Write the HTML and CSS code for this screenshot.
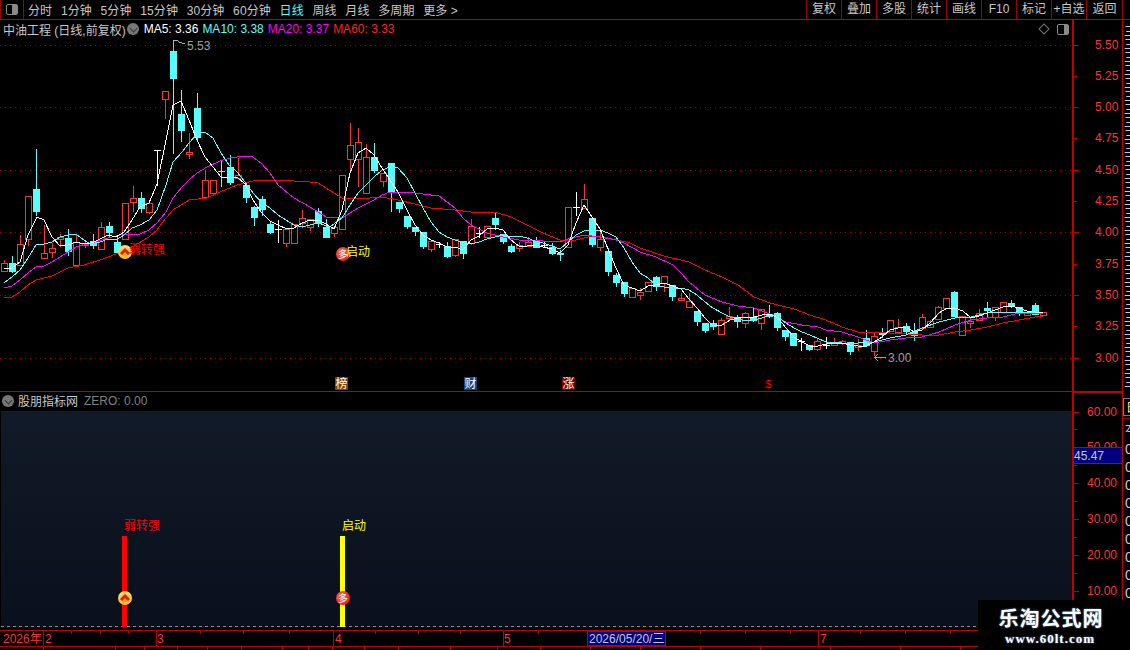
FILE: index.html
```html
<!DOCTYPE html>
<html lang="zh-CN">
<head>
  <meta charset="UTF-8" />
  <title>中油工程 日线</title>
  <link rel="stylesheet" href="styles.css">
</head>
<body>

  <header class="toolbar">
    <div class="panel-btn"><span class="panel-icon"></span></div>
    <nav class="periods">
      <a>分时</a>
      <a>1分钟</a>
      <a>5分钟</a>
      <a>15分钟</a>
      <a>30分钟</a>
      <a>60分钟</a>
      <a class="active">日线</a>
      <a>周线</a>
      <a>月线</a>
      <a>多周期</a>
      <a>更多 &gt;</a>
    </nav>
    <div class="actions">
      <a>复权</a>
      <a>叠加</a>
      <a>多股</a>
      <a>统计</a>
      <a>画线</a>
      <a>F10</a>
      <a>标记</a>
      <a>+自选</a>
      <a class="last">返回</a>
    </div>
  </header>

  <main class="workspace">
    <section class="charts">
      <div class="quote-bar">
        <span class="stock-name">中油工程 (日线,前复权)</span>
        <span class="round-icon"></span>
        <span class="ma ma5">MA5: 3.36</span>
        <span class="ma ma10">MA10: 3.38</span>
        <span class="ma ma20">MA20: 3.37</span>
        <span class="ma ma60">MA60: 3.33</span>
        <span class="diamond"></span>
        <span class="panel-icon small"></span>
      </div>
      <svg id="priceChart" class="price-chart" width="1072" height="353" viewBox="0 38 1072 353"></svg>
      <div class="indicator-bar">
        <span class="round-icon"></span>
        <span class="indicator-name">股朋指标网</span>
        <span class="indicator-value">ZERO: 0.00</span>
      </div>
      <svg id="indicatorChart" class="indicator-chart" width="1072" height="219" viewBox="0 411 1072 219"></svg>
      <svg id="dateAxis" class="date-axis" width="1072" height="20" viewBox="0 630 1072 20"></svg>
    </section>

    <svg id="valueAxis" class="value-axis" width="51" height="630" viewBox="1072 20 51 630"></svg>

    <aside class="side">
      <div id="sideTop" class="side-top"></div>
      <div class="side-code">日</div>
      <div class="side-label">本</div>
      <div id="sideRows" class="side-rows"></div>
    </aside>
  </main>

  <div class="watermark">
    <p class="wm-name">乐淘公式网</p>
    <p class="wm-url">www.60lt.com</p>
  </div>

  <script src="chart.js"></script>
</body>
</html>
```

FILE: styles.css
```css
* {
  box-sizing: border-box;
}

body {
  margin: 0;
  width: 1130px;
  height: 650px;
  overflow: hidden;
  position: relative;
  background: #000;
  color: #c8c8c8;
  font-family: "Liberation Sans", "Noto Sans CJK SC", sans-serif;
  font-size: 12px;
}

svg {
  display: block;
}

svg text {
  font-family: "Liberation Sans", "Noto Sans CJK SC", sans-serif;
  font-size: 12px;
}

.toolbar {
  display: flex;
  height: 20px;
  border-bottom: 1px solid #c00000;
}

.panel-btn {
  width: 24px;
  display: flex;
  align-items: center;
  justify-content: center;
  border-left: 1px solid #a00000;
  border-right: 1px solid #a00000;
}

.panel-icon {
  display: block;
  width: 12px;
  height: 11px;
  border: 1px solid #8a8a8a;
  border-radius: 2px;
  background: linear-gradient(to right, #000 55%, #8a8a8a 55%);
}

.periods {
  display: flex;
  align-items: center;
  gap: 8.7px;
  margin-left: 4px;
}

.periods a {
  letter-spacing: 0.1px;
}

.periods .active {
  color: #55ffff;
}

.actions {
  display: flex;
  margin-left: auto;
  margin-right: 7px;
}

.actions a {
  width: 35px;
  line-height: 19px;
  text-align: center;
  border-left: 1px solid #a00000;
}

.actions .last {
  width: 37px;
  border-right: 1px solid #a00000;
}

.workspace {
  display: flex;
  height: 630px;
}

.charts {
  width: 1072px;
  flex: none;
}

.quote-bar {
  display: flex;
  align-items: center;
  height: 18px;
  padding: 0 3px;
}

.stock-name {
  margin-right: 1px;
}

.round-icon {
  position: relative;
  display: block;
  width: 12px;
  height: 12px;
  border-radius: 50%;
  background: #777;
}

.round-icon::after {
  content: "";
  position: absolute;
  left: 3px;
  top: 2px;
  width: 6px;
  height: 6px;
  border-right: 1.5px solid #222;
  border-bottom: 1.5px solid #222;
  transform: scale(0.8) rotate(45deg);
}

.ma {
  margin-left: 4px;
}

.ma5 {
  margin-left: 5px;
  color: #fff;
}

.ma10 {
  color: #55ffff;
}

.ma20 {
  color: #ff00ff;
}

.ma60 {
  color: #ff2020;
}

.diamond {
  width: 8px;
  height: 8px;
  margin-left: auto;
  margin-right: 9px;
  border: 1px solid #777;
  transform: rotate(45deg);
}

.indicator-bar {
  display: flex;
  align-items: center;
  height: 20px;
  padding: 0 2px 2px;
  border-top: 1px solid #c00000;
}

.indicator-name {
  margin-left: 4px;
}

.indicator-value {
  margin-left: 6px;
  color: #808080;
}

.value-axis {
  flex: none;
}

.side {
  width: 7px;
  overflow: hidden;
  line-height: 13px;
}

.side-top {
  height: 372px;
  padding: 6px 0 0 1px;
  overflow: hidden;
}

.side-code {
  height: 18px;
  margin-top: 6px;
  padding-left: 2px;
  line-height: 18px;
  color: #ffff55;
  border: 1px solid #777;
  border-right: 0;
}

.side-label {
  height: 22px;
  margin-top: 2px;
  padding: 4px 0 0 2px;
  border-top: 1px solid #a00000;
}

.side-rows {
  padding-left: 2px;
  line-height: 18px;
  font-size: 14px;
  white-space: nowrap;
}

.watermark {
  position: absolute;
  right: 0;
  bottom: 0;
  width: 152px;
  height: 50px;
  background: #000;
  color: #fff;
  text-align: center;
}

.watermark p {
  margin: 0;
  text-shadow: 0 0 2px #6d9bd8;
}

.wm-name {
  padding: 7px 6px 0 0;
  font-size: 20px;
  line-height: 25px;
  font-weight: bold;
  letter-spacing: 1px;
}

.wm-url {
  padding-right: 8px;
  font-family: "Liberation Serif", serif;
  font-size: 13px;
  line-height: 14px;
  font-weight: bold;
  letter-spacing: 1px;
}
```

FILE: chart.js
```js
// [type, high, top, bottom, low] in screen pixels. r = hollow up, c = solid down, w = doji
const candles = [
  ['r',260,263,271,271],['c',256,263,271,273],['r',235,244,265,265],['r',196,196,239,246],['c',149,189,211,216],
  ['r',225,253,258,258],['r',243,248,252,258],['r',234,237,239,247],['c',229,238,251,256],['r',235,242,265,267],
  ['r',242,243,245,248],['c',234,241,245,249],['r',222,227,249,249],['c',222,226,232,237],['c',237,242,252,253],
  ['r',203,203,239,239],['r',186,198,202,212],['c',192,198,208,213],['r',203,203,212,214],['w',150,150,150,186],
  ['r',91,91,99,119],['c',40,51,78,154],['c',90,114,130,142],['r',133,152,154,159],['c',93,108,137,140],
  ['r',170,180,197,197],['r',180,180,193,193],['c',160,171,171,187],['c',155,167,182,185],['r',158,175,178,178],
  ['c',185,185,197,203],['c',206,207,217,226],['c',196,199,209,216],['c',221,224,232,234],['w',220,229,229,243],
  ['r',229,229,243,247],['r',224,224,243,243],['r',210,218,223,228],['r',219,219,227,231],['c',208,211,223,227],
  ['c',219,227,237,237],['r',226,227,233,237],['r',175,175,229,229],['r',123,145,159,173],['r',128,142,159,187],
  ['r',144,157,193,193],['c',143,157,170,173],['r',173,173,181,187],['c',163,163,191,212],['c',202,202,208,213],
  ['c',216,216,226,229],['c',227,227,231,236],['c',232,232,246,249],['r',241,241,249,252],['w',242,244,244,248],
  ['c',242,246,256,258],['r',239,239,255,257],['c',241,241,253,259],['r',219,226,243,245],['w',227,233,233,238],
  ['r',226,226,237,237],['c',213,218,224,230],['c',234,234,241,244],['c',244,246,251,253],['r',242,245,248,252],
  ['r',237,242,246,246],['c',237,241,247,248],['w',242,245,245,248],['c',243,247,253,255],['c',250,253,254,261],
  ['r',207,207,247,247],['w',192,207,207,216],['r',184,199,208,208],['c',218,218,244,247],['r',232,239,247,251],
  ['c',248,251,271,276],['c',273,275,282,287],['c',282,282,293,297],['r',288,288,297,298],['r',288,292,295,300],
  ['r',282,282,291,291],['c',276,277,286,291],['r',276,276,283,292],['c',285,285,296,301],['r',293,298,300,300],
  ['r',293,301,307,308],['c',311,311,321,326],['c',323,323,330,333],['c',320,323,326,330],['r',318,320,334,335],
  ['r',307,316,318,321],['c',315,317,321,328],['r',312,313,323,328],['c',307,317,320,322],['r',309,309,323,330],
  ['c',305,314,316,318],['c',312,313,327,331],['c',330,330,336,341],['c',333,333,345,345],['w',338,341,341,351],
  ['c',345,345,349,351],['r',339,341,349,351],['w',337,345,345,349],['r',338,342,345,345],['r',340,341,343,345],
  ['c',342,342,351,355],['r',339,345,347,351],['c',330,338,345,347],['r',332,336,351,356],['c',328,332,334,338],
  ['r',320,320,331,331],['r',319,327,332,332],['c',323,326,331,335],['c',323,332,335,341],['r',314,317,328,329],
  ['r',320,321,327,328],['r',306,307,319,319],['r',298,298,308,308],['c',291,292,316,316],['r',316,316,335,335],
  ['r',317,321,323,328],['r',309,313,320,320],['c',302,308,310,318],['r',307,307,317,321],['r',302,302,312,312],
  ['c',300,303,306,308],['c',307,307,311,316],['r',312,312,315,315],['c',303,305,314,315],['r',312,312,315,315]
];

const ma5 = [4,268,12,268,20,262,28,235,37,217,44,220,52,237,60,246,68,245,76,242,84,244,92,243,100,239,108,235,116,237,124,232,132,220,140,207,149,203,157,184,166,140,173,105,181,101,189,120,197,140,205,157,213,167,221,177,229,178,237,177,245,184,253,200,261,212,270,221,278,225,287,229,294,228,302,223,310,220,318,220,326,224,334,229,342,210,350,173,358,153,366,148,374,155,382,168,390,180,398,192,407,210,415,225,423,235,431,240,439,243,447,247,455,247,463,250,471,240,479,236,487,229,495,228,503,230,511,240,519,246,527,246,535,245,543,247,552,249,560,253,568,245,576,223,584,205,592,217,600,229,608,249,616,268,624,285,632,288,640,291,648,286,656,285,664,283,673,286,681,289,689,299,697,308,705,318,713,326,722,325,730,320,738,318,746,317,754,317,762,315,770,314,778,318,786,328,794,337,802,342,810,346,818,346,826,344,834,343,842,343,850,345,858,346,866,346,874,342,882,337,890,330,898,328,906,327,914,332,922,330,930,323,939,313,947,308,955,308,963,311,971,318,979,316,987,313,995,310,1003,307,1011,306,1019,308,1027,311,1035,312,1043,313];
const ma10 = [4,283,12,277,20,270,28,258,36,245,44,244,52,242,60,237,68,235,76,234,84,240,92,245,100,242,108,239,116,240,124,235,132,228,140,225,149,220,157,210,166,185,173,162,182,152,189,143,197,134,205,132,213,138,221,153,229,165,237,172,245,182,253,193,261,202,270,208,278,215,286,220,294,225,302,227,318,223,330,227,342,218,350,205,358,193,366,185,374,177,382,170,390,167,398,168,407,178,415,193,423,208,431,222,439,232,447,237,455,240,463,243,471,244,479,242,487,239,495,237,503,235,511,237,519,236,527,238,535,241,543,243,552,246,560,249,568,242,576,235,584,231,592,230,600,230,608,233,616,237,624,248,632,262,640,273,648,278,656,285,664,287,673,288,681,288,689,290,697,295,705,302,713,308,722,313,730,317,738,319,746,321,754,320,762,318,770,315,778,317,786,323,794,328,802,332,810,335,826,342,842,343,858,343,874,342,890,338,906,335,922,328,939,322,955,318,971,317,987,313,1003,312,1019,312,1035,312,1043,312];
const ma20 = [4,288,12,286,20,280,28,273,36,267,44,266,52,262,60,257,68,252,76,247,84,245,92,243,108,238,124,234,140,234,149,230,157,223,166,212,173,198,182,187,189,180,197,173,207,167,220,161,230,158,245,156,253,157,261,163,270,173,278,185,294,198,310,207,326,217,342,218,350,213,358,208,374,200,382,195,390,192,398,192,415,193,431,195,439,196,447,202,455,208,463,218,471,225,487,233,503,237,519,240,543,241,560,242,568,239,584,235,600,237,616,240,624,243,640,252,656,257,673,265,681,273,689,282,705,295,722,302,738,306,754,308,770,314,786,322,802,325,818,327,826,330,842,332,858,337,874,343,890,340,906,338,922,337,939,332,955,325,971,320,987,318,1003,317,1019,313,1035,313,1043,313];
const ma60 = [4,298,12,297,20,292,28,285,36,280,52,276,68,268,84,265,100,260,116,254,132,247,149,237,157,230,166,218,173,210,189,200,207,198,220,192,237,185,253,181,278,180,294,181,310,182,318,183,326,188,334,193,342,198,358,199,382,197,398,200,415,204,431,208,455,210,471,212,495,212,511,217,527,225,543,233,560,240,576,240,592,236,608,238,630,243,640,248,664,256,689,262,705,270,722,277,738,285,754,297,770,303,794,309,810,315,826,320,842,327,858,332,874,332,890,333,922,335,939,335,955,332,971,330,987,327,1003,323,1019,320,1035,317,1043,316];

const RED = '#ff3232';
const CYAN = '#55ffff';
const AXIS = '#c00000';

function priceY(price) {
  return 44.5 + (5.5 - price) * 125.2;
}

function line(x1, y1, x2, y2, color) {
  return `<line x1="${x1}" y1="${y1}" x2="${x2}" y2="${y2}" stroke="${color}" shape-rendering="crispEdges"/>`;
}

function label(x, y, str, color) {
  return `<text x="${x}" y="${y}" fill="${color}">${str}</text>`;
}

function polyline(points, color) {
  return `<polyline points="${points.join(' ')}" fill="none" stroke="${color}" shape-rendering="crispEdges"/>`;
}

function drawCandle(c, i) {
  const x = Math.round(4 + i * 8.054);
  const mid = x + 0.5;
  const [type, high, top, bottom, low] = c;
  let out = '';

  if (type === 'w') {
    out += line(mid, high, mid, low, '#fff');
    out += line(x - 3, top + 0.5, x + 4, top + 0.5, '#fff');
  } else if (type === 'c') {
    out += line(mid, high, mid, low, CYAN);
    out += `<rect x="${x - 3}" y="${top}" width="7" height="${bottom - top + 1}" fill="${CYAN}" shape-rendering="crispEdges"/>`;
  } else {
    out += line(mid, high, mid, low, RED);
    out += `<rect x="${x - 2.5}" y="${top + 0.5}" width="6" height="${bottom - top}" fill="#000" stroke="${RED}" shape-rendering="crispEdges"/>`;
  }
  return out;
}

// gold badge with a red chevron
function goldBadge(x, y) {
  return `<circle cx="${x}" cy="${y}" r="7" fill="url(#goldFill)"/>` +
    `<path d="M${x - 5} ${y + 1} L${x} ${y - 4} L${x + 5} ${y + 1} L${x + 3} ${y + 3} L${x} ${y} L${x - 3} ${y + 3} Z" fill="#d8201a"/>`;
}

// red badge with the character on it
function redBadge(x, y) {
  return `<circle cx="${x}" cy="${y}" r="7" fill="url(#redFill)"/>` +
    `<text x="${x}" y="${y + 4}" fill="#fff" text-anchor="middle" style="font-size:10px">多</text>`;
}

const gradients = `
  <defs>
    <radialGradient id="goldFill" cx="50%" cy="65%" r="60%">
      <stop offset="0%" stop-color="#ff9a10"/>
      <stop offset="100%" stop-color="#ffe060"/>
    </radialGradient>
    <radialGradient id="redFill" cx="40%" cy="40%" r="65%">
      <stop offset="0%" stop-color="#ff7a60"/>
      <stop offset="100%" stop-color="#e8140c"/>
    </radialGradient>
    <linearGradient id="paneFill" x1="0" y1="0" x2="0" y2="1">
      <stop offset="0%" stop-color="#111a28"/>
      <stop offset="100%" stop-color="#0a101c"/>
    </linearGradient>
  </defs>`;

function renderPrice() {
  let out = gradients;

  [5.5, 5, 4.5, 4, 3.5, 3].forEach(p => {
    const y = Math.round(priceY(p)) + 0.5;
    out += `<line x1="0" y1="${y}" x2="1072" y2="${y}" stroke="#a00000" stroke-dasharray="1 4" shape-rendering="crispEdges"/>`;
  });

  out += candles.map(drawCandle).join('');
  out += polyline(ma60, '#ff0000');
  out += polyline(ma20, '#ff00ff');
  out += polyline(ma10, CYAN);
  out += polyline(ma5, '#fff');

  // high and low notes
  out += '<polyline points="173.5,50 173.5,40.5 177,40.5 180,42.5 185,44" fill="none" stroke="#b0b0b0" shape-rendering="crispEdges"/>';
  out += label(187, 50, '5.53', '#a0a0a0');
  out += '<polyline points="878,354 874.5,357.5 878,361" fill="none" stroke="#a0a0a0" shape-rendering="crispEdges"/>';
  out += line(875, 357.5, 886, 357.5, '#a0a0a0');
  out += label(888, 362, '3.00', '#a0a0a0');

  // signals
  out += goldBadge(125, 252);
  out += label(129, 254, '弱转强', '#ff0000');
  out += redBadge(343, 254);
  out += label(346, 256, '启动', '#ffff00');

  // event tags along the bottom
  [[335, '榜', '#804000'], [464, '财', '#0a4a8a'], [562, '涨', '#800000']].forEach(t => {
    out += `<rect x="${t[0]}" y="377" width="13" height="13" fill="${t[2]}"/>`;
    out += `<text x="${t[0] + 6.5}" y="388" fill="#fff" text-anchor="middle">${t[1]}</text>`;
  });
  out += '<text x="768.5" y="388" fill="#ff0000" text-anchor="middle" style="font-size:11px">$</text>';

  document.getElementById('priceChart').innerHTML = out;
}

function renderIndicator() {
  let out = gradients.replace(/Fill"/g, 'Fill2"');
  out += '<rect x="1" y="411" width="1071" height="217" fill="url(#paneFill2)"/>';
  out += '<line x1="1" y1="626.5" x2="1072" y2="626.5" stroke="#8a8a8a" stroke-dasharray="3 3" shape-rendering="crispEdges"/>';
  out += '<rect x="122" y="536" width="5" height="91" fill="#ff0000"/>';
  out += '<rect x="340" y="536" width="5" height="91" fill="#ffff00"/>';
  out += label(124, 530, '弱转强', '#ff0000');
  out += label(342, 530, '启动', '#ffff00');
  out += goldBadge(125, 598).replace('goldFill', 'goldFill2');
  out += redBadge(343, 598).replace('redFill', 'redFill2');
  document.getElementById('indicatorChart').innerHTML = out;
}

function renderDates() {
  let out = line(0, 630.5, 1072, 630.5, AXIS) + line(0, 646.5, 1072, 646.5, AXIS);

  [71, 100, 128, 200, 243, 289, 375, 418, 460, 538, 700, 745, 790, 860, 905, 950].forEach(x => {
    out += line(x + 0.5, 631, x + 0.5, 634, AXIS);
  });
  [43, 156, 333, 503, 818].forEach(x => {
    out += line(x + 0.5, 631, x + 0.5, 646, AXIS);
  });
  [43, 115, 144, 177, 207, 241, 282, 308, 332, 364, 398, 450, 497, 540, 590, 640, 700, 760, 830, 900, 960].forEach(x => {
    out += line(x + 0.5, 647, x + 0.5, 650, AXIS);
  });

  out += label(3, 643, '2026年', RED);
  out += label(45, 643, '2', RED);
  out += label(157, 643, '3', RED);
  out += label(335, 643, '4', RED);
  out += label(504, 643, '5', RED);
  out += label(820, 643, '7', RED);

  out += `<rect x="587.5" y="631.5" width="78" height="14" fill="#000080" stroke="${AXIS}" shape-rendering="crispEdges"/>`;
  out += label(589, 643, '2026/05/20/三', '#c8c8c8');

  document.getElementById('dateAxis').innerHTML = out;
}

function renderAxis() {
  let out = line(1073, 20, 1073, 650, AXIS) + line(1072, 20, 1072, 650, AXIS);
  out += line(1122.5, 20, 1122.5, 650, AXIS);
  out += line(1072, 392, 1123, 392, AXIS) + line(1072, 391, 1123, 391, AXIS);
  out += line(1072, 630.5, 1123, 630.5, AXIS);

  for (let p = 550; p >= 300; p -= 25) {
    const y = Math.round(priceY(p / 100)) + 0.5;
    const major = p % 50 === 0;
    out += line(1074, y, major ? 1079 : 1077, y, AXIS);
    out += label(1095, y + 3, (p / 100).toFixed(2), RED);
  }

  // lower pane, one unit is 3.59px
  for (let v = 60; v >= 5; v -= 5) {
    const y = Math.round(411.5 + (60 - v) * 3.59) + 0.5;
    const major = v % 10 === 0;
    out += line(1074, y, major ? 1079 : 1077, y, AXIS);
    if (major) out += label(1087, y + 3, v.toFixed(2), RED);
  }

  out += `<rect x="1073.5" y="447.5" width="49" height="16" fill="#000080" stroke="${AXIS}" shape-rendering="crispEdges"/>`;
  out += label(1074, 460, '45.47', '#c8c8c8');

  document.getElementById('valueAxis').innerHTML = out;
}

function renderSide() {
  document.getElementById('sideTop').innerHTML = Array(28).fill('<div>三</div>').join('');
  document.getElementById('sideRows').innerHTML = Array(11).fill('<div>0</div>').join('');
}

renderPrice();
renderIndicator();
renderDates();
renderAxis();
renderSide();
```
